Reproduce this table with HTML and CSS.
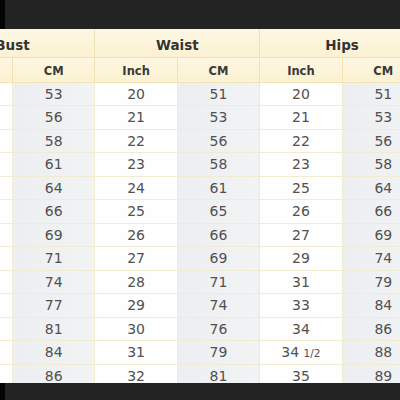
FILE: index.html
```html
<!DOCTYPE html>
<html>
<head>
<meta charset="utf-8">
<link rel="stylesheet" href="styles.css">
</head>
<body>
<div class="page">
  <div class="bar"><span class="edge"></span></div>
  <div class="viewport">
    <table class="sizes">
      <colgroup>
        <col class="c-inch"><col class="c-cm"><col class="c-inch"><col class="c-cm"><col class="c-inch"><col class="c-cm">
      </colgroup>
      <thead>
        <tr class="group-row">
          <th colspan="2">Bust</th>
          <th colspan="2">Waist</th>
          <th colspan="2">Hips</th>
        </tr>
        <tr class="unit-row">
          <th>Inch</th><th>CM</th><th>Inch</th><th>CM</th><th>Inch</th><th>CM</th>
        </tr>
      </thead>
      <tbody>
        <tr><td class="inch">21</td><td class="cm">53</td><td class="inch">20</td><td class="cm">51</td><td class="inch">20</td><td class="cm">51</td></tr>
        <tr><td class="inch">22</td><td class="cm">56</td><td class="inch">21</td><td class="cm">53</td><td class="inch">21</td><td class="cm">53</td></tr>
        <tr><td class="inch">23</td><td class="cm">58</td><td class="inch">22</td><td class="cm">56</td><td class="inch">22</td><td class="cm">56</td></tr>
        <tr><td class="inch">24</td><td class="cm">61</td><td class="inch">23</td><td class="cm">58</td><td class="inch">23</td><td class="cm">58</td></tr>
        <tr><td class="inch">25</td><td class="cm">64</td><td class="inch">24</td><td class="cm">61</td><td class="inch">25</td><td class="cm">64</td></tr>
        <tr><td class="inch">26</td><td class="cm">66</td><td class="inch">25</td><td class="cm">65</td><td class="inch">26</td><td class="cm">66</td></tr>
        <tr><td class="inch">27</td><td class="cm">69</td><td class="inch">26</td><td class="cm">66</td><td class="inch">27</td><td class="cm">69</td></tr>
        <tr><td class="inch">28</td><td class="cm">71</td><td class="inch">27</td><td class="cm">69</td><td class="inch">29</td><td class="cm">74</td></tr>
        <tr><td class="inch">29</td><td class="cm">74</td><td class="inch">28</td><td class="cm">71</td><td class="inch">31</td><td class="cm">79</td></tr>
        <tr><td class="inch">30</td><td class="cm">77</td><td class="inch">29</td><td class="cm">74</td><td class="inch">33</td><td class="cm">84</td></tr>
        <tr><td class="inch">32</td><td class="cm">81</td><td class="inch">30</td><td class="cm">76</td><td class="inch">34</td><td class="cm">86</td></tr>
        <tr><td class="inch">33</td><td class="cm">84</td><td class="inch">31</td><td class="cm">79</td><td class="inch">34 <span class="frac">1/2</span></td><td class="cm">88</td></tr>
        <tr><td class="inch">34</td><td class="cm">86</td><td class="inch">32</td><td class="cm">81</td><td class="inch">35</td><td class="cm">89</td></tr>
      </tbody>
    </table>
  </div>
  <div class="bar bar-bottom"><span class="edge"></span></div>
</div>
</body>
</html>
```

FILE: styles.css
```css
html, body {
  margin: 0;
  padding: 0;
  background: #222222;
}

.page {
  width: 400px;
  height: 400px;
  display: flex;
  flex-direction: column;
  overflow: hidden;
}

.bar {
  height: 29px;
  flex: 0 0 auto;
  display: flex;
  background: #232323;
}

.bar-bottom {
  height: 17px;
}

.edge {
  width: 5px;
  background: #030303;
}

.viewport {
  flex: 1 1 auto;
  overflow: hidden;
  background: #ffffff;
}

.sizes {
  margin-left: -70.4px;
  width: 494.4px;
  table-layout: fixed;
  border-collapse: collapse;
  font-family: "DejaVu Sans", Verdana, sans-serif;
  color: #505050;
}

.sizes col {
  width: 82.4px;
}

.sizes th {
  padding: 0;
  text-align: center;
  font-weight: bold;
  color: #333333;
  background: linear-gradient(#fdf7e3, #fbf1d2);
  border: 1px solid #efe3b4;
}

.group-row th {
  height: 28px;
  padding-top: 4px;
  font-size: 13.5px;
  border-top: none;
  box-sizing: border-box;
}

.unit-row th {
  height: 25px;
  padding-top: 2px;
  font-size: 11.5px;
  color: #3a3a3a;
  box-sizing: border-box;
}

.sizes td {
  height: 22.5px;
  padding: 0;
  text-align: center;
  font-size: 14px;
  border: 1px solid #f1ecd0;
}

.sizes td.inch {
  background: #fefefe;
}

.sizes td.cm {
  background: linear-gradient(90deg, #eceef1, #f2f3f4);
}

.frac {
  font-size: 10.5px;
}
```
